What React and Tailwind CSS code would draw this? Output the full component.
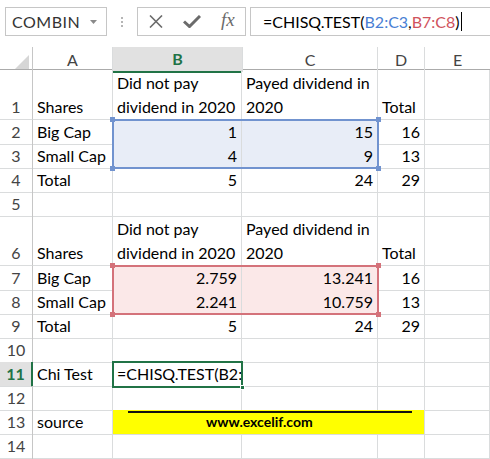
import React from "react";
import clsx from "clsx";

const font = { fontFamily: "Lato, 'Open Sans', Arial, sans-serif" };
const cols = "grid grid-cols-[33px_80px_129px_136px_47px_65px]";

const rows = [
  { n: "1", tall: true, cells: [{ t: "Shares" }, { t: ["Did not pay", "dividend in 2020"] }, { t: ["Payed dividend in", "2020"] }, { t: "Total" }, {}] },
  { n: "2", cells: [{ t: "Big Cap" }, { t: "1", r: 1, f: "blue" }, { t: "15", r: 1, f: "blue" }, { t: "16", r: 1 }, {}] },
  { n: "3", cells: [{ t: "Small Cap" }, { t: "4", r: 1, f: "blue" }, { t: "9", r: 1, f: "blue" }, { t: "13", r: 1 }, {}] },
  { n: "4", cells: [{ t: "Total" }, { t: "5", r: 1 }, { t: "24", r: 1 }, { t: "29", r: 1 }, {}] },
  { n: "5", cells: [{}, {}, {}, {}, {}] },
  { n: "6", tall: true, cells: [{ t: "Shares" }, { t: ["Did not pay", "dividend in 2020"] }, { t: ["Payed dividend in", "2020"] }, { t: "Total" }, {}] },
  { n: "7", cells: [{ t: "Big Cap" }, { t: "2.759", r: 1, f: "red" }, { t: "13.241", r: 1, f: "red" }, { t: "16", r: 1 }, {}] },
  { n: "8", cells: [{ t: "Small Cap" }, { t: "2.241", r: 1, f: "red" }, { t: "10.759", r: 1, f: "red" }, { t: "13", r: 1 }, {}] },
  { n: "9", cells: [{ t: "Total" }, { t: "5", r: 1 }, { t: "24", r: 1 }, { t: "29", r: 1 }, {}] },
  { n: "10", cells: [{}, {}, {}, {}, {}] },
  { n: "11", active: true, cells: [{ t: "Chi Test" }, { t: "=CHISQ.TEST(B2:" }, {}, {}, {}] },
  { n: "12", cells: [{}, {}, {}, {}, {}] },
  { n: "13", source: true, cells: [{ t: "source" }, {}, {}, {}, {}] },
  { n: "14", cells: [{}, {}, {}, {}, {}] },
  { n: "", cells: [{}, {}, {}, {}, {}] },
];

function Cell({ cell }) {
  const multi = Array.isArray(cell.t);
  return (
    <div
      className={clsx(
        "flex border-r border-b border-[#dadcdd] px-1 leading-6 overflow-hidden whitespace-nowrap",
        multi ? "flex-col justify-end" : "items-end",
        cell.r && "justify-end",
        cell.f === "blue" && "bg-[#e8edf7]",
        cell.f === "red" && "bg-[#fbe8e8]"
      )}
    >
      {multi ? cell.t.map((l) => <span key={l}>{l}</span>) : cell.t}
    </div>
  );
}

function Range({ className, color }) {
  const h = clsx("absolute w-[5px] h-[5px]", color);
  return (
    <div className={clsx("absolute border-2 pointer-events-none", className)}>
      <div className={clsx(h, "-left-[4px] -top-[4px]")} />
      <div className={clsx(h, "-right-[4px] -top-[4px]")} />
      <div className={clsx(h, "-left-[4px] -bottom-[4px]")} />
      <div className={clsx(h, "-right-[4px] -bottom-[4px]")} />
    </div>
  );
}

function FormulaBar() {
  return (
    <div className="flex h-[47px] pt-[7px] pl-[5px] bg-white text-[16px]">
      <div className="flex items-center justify-between w-[102px] h-[29px] border border-[#c6c6c6] pl-[6px] pr-[9px] text-[#333]">
        <span className="tracking-[0.5px]">COMBIN</span>
        <svg width="7" height="4" viewBox="0 0 7 4"><path d="M0 0h7L3.5 4z" fill="#8a8a8a" /></svg>
      </div>
      <div className="flex flex-col justify-center gap-[2px] w-[30px] items-center h-[29px]">
        <div className="w-[2px] h-[2px] bg-[#b5b5b5]" />
        <div className="w-[2px] h-[2px] bg-[#b5b5b5]" />
        <div className="w-[2px] h-[2px] bg-[#b5b5b5]" />
      </div>
      <div className="flex items-center w-[109px] h-[29px] border border-[#c6c6c6] pl-[11px] gap-[20px]">
        <svg width="14" height="13" viewBox="0 0 14 13">
          <path d="M1 0.5L13 12.5M13 0.5L1 12.5" stroke="#6b6b6b" strokeWidth="1.6" />
        </svg>
        <svg width="18" height="13" viewBox="0 0 18 13">
          <path d="M1 6.5L6.5 11.5L17 1" stroke="#6b6b6b" strokeWidth="3" fill="none" />
        </svg>
        <span className="italic text-[19px] text-[#6b6b6b] -mt-[2px]" style={{ fontFamily: "'Liberation Serif', serif" }}>fx</span>
      </div>
      <div className="flex items-center flex-1 h-[29px] ml-[4px] border-y border-l border-[#c6c6c6] pl-[12px] text-black">
        <span>=CHISQ.TEST(</span>
        <span className="text-[#4a7fd4]">B2:C3</span>
        <span>,</span>
        <span className="text-[#d0535d]">B7:C8</span>
        <span>)</span>
        <span className="w-px h-[19px] bg-black ml-[1px]" />
      </div>
    </div>
  );
}

export default function App() {
  return (
    <div className="w-[490px] h-[459px] overflow-hidden bg-white text-[16px] text-black" style={font}>
      <FormulaBar />
      <div className="relative">
        <div className={clsx(cols, "h-[23px] text-[16px] text-[#444] border-b border-[#ababab]")}>
          <div className="relative border-r border-[#c6c6c6]">
            <svg className="absolute right-[3px] bottom-[3px]" width="14" height="14" viewBox="0 0 14 14"><path d="M14 0V14H0z" fill="#d6d6d6" /></svg>
          </div>
          <div className="flex items-center justify-center border-r border-[#dadcdd]">A</div>
          <div className="flex items-center justify-center bg-[#e1e1e1] border-b-2 border-[#217346] text-[#217346] font-bold -mb-px">B</div>
          <div className="flex items-center justify-center border-x border-[#dadcdd]">C</div>
          <div className="flex items-center justify-center border-r border-[#dadcdd]">D</div>
          <div className="flex items-center justify-center">E</div>
        </div>
        {rows.map((row, idx) => (
          <div key={idx} className={clsx(cols, row.tall ? "h-[50px]" : "h-6")}>
            <div
              className={clsx(
                "flex items-end justify-center leading-6 text-[16px] border-b border-[#dadcdd]",
                row.active ? "bg-[#e1e1e1] text-[#217346] font-bold border-r-2 border-r-[#217346]" : "text-[#444] border-r border-r-[#c6c6c6]"
              )}
            >
              {row.n}
            </div>
            {row.source ? (
              <>
                <Cell cell={row.cells[0]} />
                <div className="relative col-span-3 flex items-end bg-[#ffff00] border-b border-r border-[#dadcdd] pl-[93px] leading-6 text-[14px] font-bold">
                  <div className="absolute left-[15px] right-[12px] top-px h-[2px] bg-[#111]" />
                  www.excelif.com
                </div>
                <Cell cell={row.cells[4]} />
              </>
            ) : (
              row.cells.map((c, i) => <Cell key={i} cell={c} />)
            )}
          </div>
        ))}
        <Range className="left-[112px] top-[72px] w-[267px] h-[50px] border-[#7193cf]" color="bg-[#7193cf]" />
        <Range className="left-[112px] top-[218px] w-[267px] h-[50px] border-[#d4727a]" color="bg-[#d4727a]" />
        <div className="absolute left-[112px] top-[314px] w-[131px] h-[27px] border-2 border-[#217346]">
          <div className="absolute -right-[4px] -bottom-[4px] w-[5px] h-[5px] bg-[#217346] border border-white" />
        </div>
      </div>
    </div>
  );
}
